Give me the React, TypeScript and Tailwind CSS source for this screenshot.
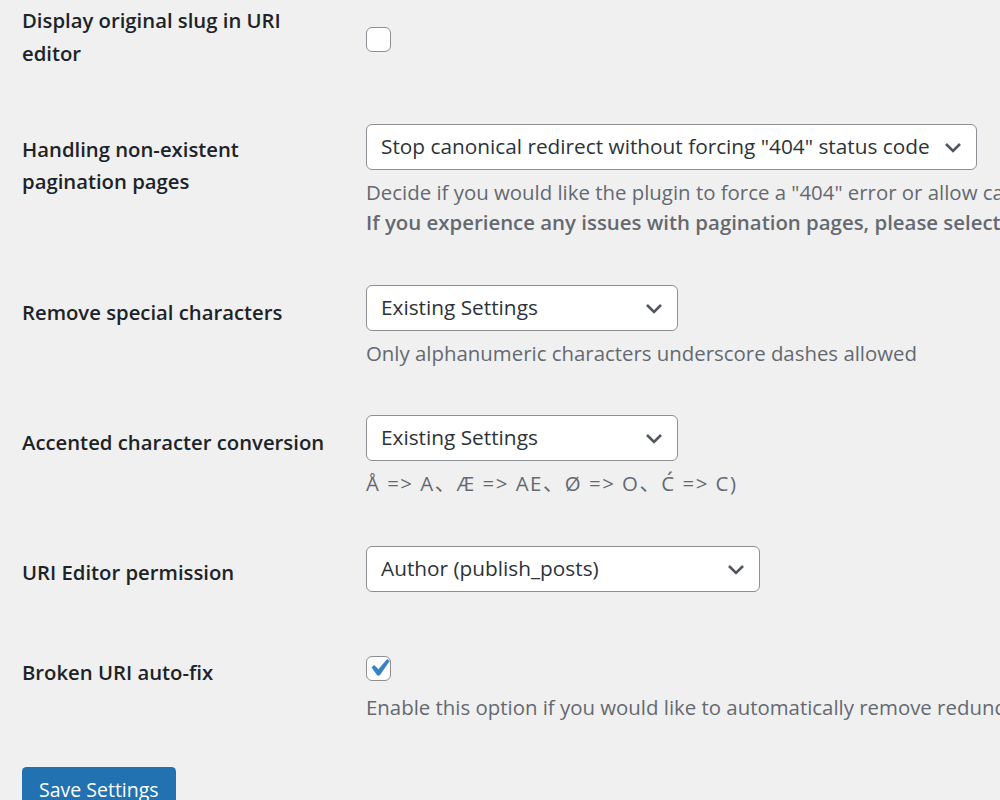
import React from "react";

const font = "font-['Open_Sans','Noto_Sans_CJK_SC',sans-serif]";

function Chevron() {
  return (
    <svg width="18" height="11" viewBox="0 0 18 11" className="shrink-0">
      <path d="M2 2l7 7 7-7" fill="none" stroke="#50575e" strokeWidth="2.6" />
    </svg>
  );
}

function Select({ value, width }: { value: string; width: string }) {
  return (
    <div
      className={`flex h-[46px] items-center justify-between rounded-[6px] border border-[#8c8f94] bg-white pl-[14px] pr-[14px] text-[20.8px] text-[#2c3338] ${width}`}
    >
      <span className="whitespace-nowrap">{value}</span>
      <Chevron />
    </div>
  );
}

function Checkbox({ checked }: { checked?: boolean }) {
  return (
    <div className="flex h-[25px] w-[25px] items-center justify-center rounded-[6px] border-[1.5px] border-[#8c8f94] bg-white">
      {checked && (
        <svg width="34" height="34" viewBox="0 0 20 20" className="-mt-[1px] shrink-0">
          <path
            d="M14.83 4.89l1.34.94-5.81 8.38H9.02L5.78 9.67l1.34-1.25 2.57 2.4z"
            fill="#3582c4"
            stroke="#3582c4"
            strokeWidth="0.3"
          />
        </svg>
      )}
    </div>
  );
}

function Row({
  label,
  height,
  labelTop,
  controlTop,
  children,
}: {
  label: React.ReactNode;
  height: string;
  labelTop: string;
  controlTop: string;
  children: React.ReactNode;
}) {
  return (
    <div className={`flex ${height}`}>
      <div className={`w-[344px] shrink-0 pr-4 text-[20.3px] font-semibold leading-[32px] text-[#1d2327] ${labelTop}`}>
        {label}
      </div>
      <div className={`min-w-0 flex-1 ${controlTop}`}>{children}</div>
    </div>
  );
}

function Desc({ children, className = "" }: { children: React.ReactNode; className?: string }) {
  return (
    <p className={`whitespace-nowrap text-[20.4px] leading-[30px] text-[#646970] ${className}`}>{children}</p>
  );
}

export default function App() {
  return (
    <div className={`h-[800px] w-[1000px] overflow-hidden bg-[#f0f0f1] pl-[22px] ${font}`}>
      <Row
        label={<>Display original slug in URI<br /><span className="block pt-[1px]">editor</span></>}
        height="h-[101px]"
        labelTop="pt-[4px]"
        controlTop="pt-[27px]"
      >
        <Checkbox />
      </Row>

      <Row
        label={<>Handling non-existent<br />pagination pages</>}
        height="h-[161px]"
        labelTop="pt-[32px]"
        controlTop="pt-[23px]"
      >
        <Select value={'Stop canonical redirect without forcing "404" status code'} width="w-[611px]" />
        <Desc className="mt-[7px]">
          Decide if you would like the plugin to force a "404" error or allow canonical redirect for non-existent pagination pages.
        </Desc>
        <Desc className="font-semibold">
          If you experience any issues with pagination pages, please select "Stop canonical redirect" option.
        </Desc>
      </Row>

      <Row label="Remove special characters" height="h-[130px]" labelTop="pt-[34px]" controlTop="pt-[23px]">
        <Select value="Existing Settings" width="w-[312px]" />
        <Desc className="mt-[7px]">Only alphanumeric characters underscore dashes allowed</Desc>
      </Row>

      <Row label="Accented character conversion" height="h-[131px]" labelTop="pt-[34px]" controlTop="pt-[23px]">
        <Select value="Existing Settings" width="w-[312px]" />
        <Desc className="mt-[7px] tracking-[1.5px]">Å =&gt; A、Æ =&gt; AE、Ø =&gt; O、Ć =&gt; C)</Desc>
      </Row>

      <Row label="URI Editor permission" height="h-[110px]" labelTop="pt-[33px]" controlTop="pt-[23px]">
        <Select value="Author (publish_posts)" width="w-[394px]" />
      </Row>

      <Row label="Broken URI auto-fix" height="h-[134px]" labelTop="pt-[23px]" controlTop="pt-[23px]">
        <Checkbox checked />
        <Desc className="mt-[11px]">
          Enable this option if you would like to automatically remove redundant permalinks stored in the database.
        </Desc>
      </Row>

      <button className="h-[46px] rounded-[4.5px] bg-[#2271b1] px-[17px] text-[19.5px] text-white">
        Save Settings
      </button>
    </div>
  );
}
